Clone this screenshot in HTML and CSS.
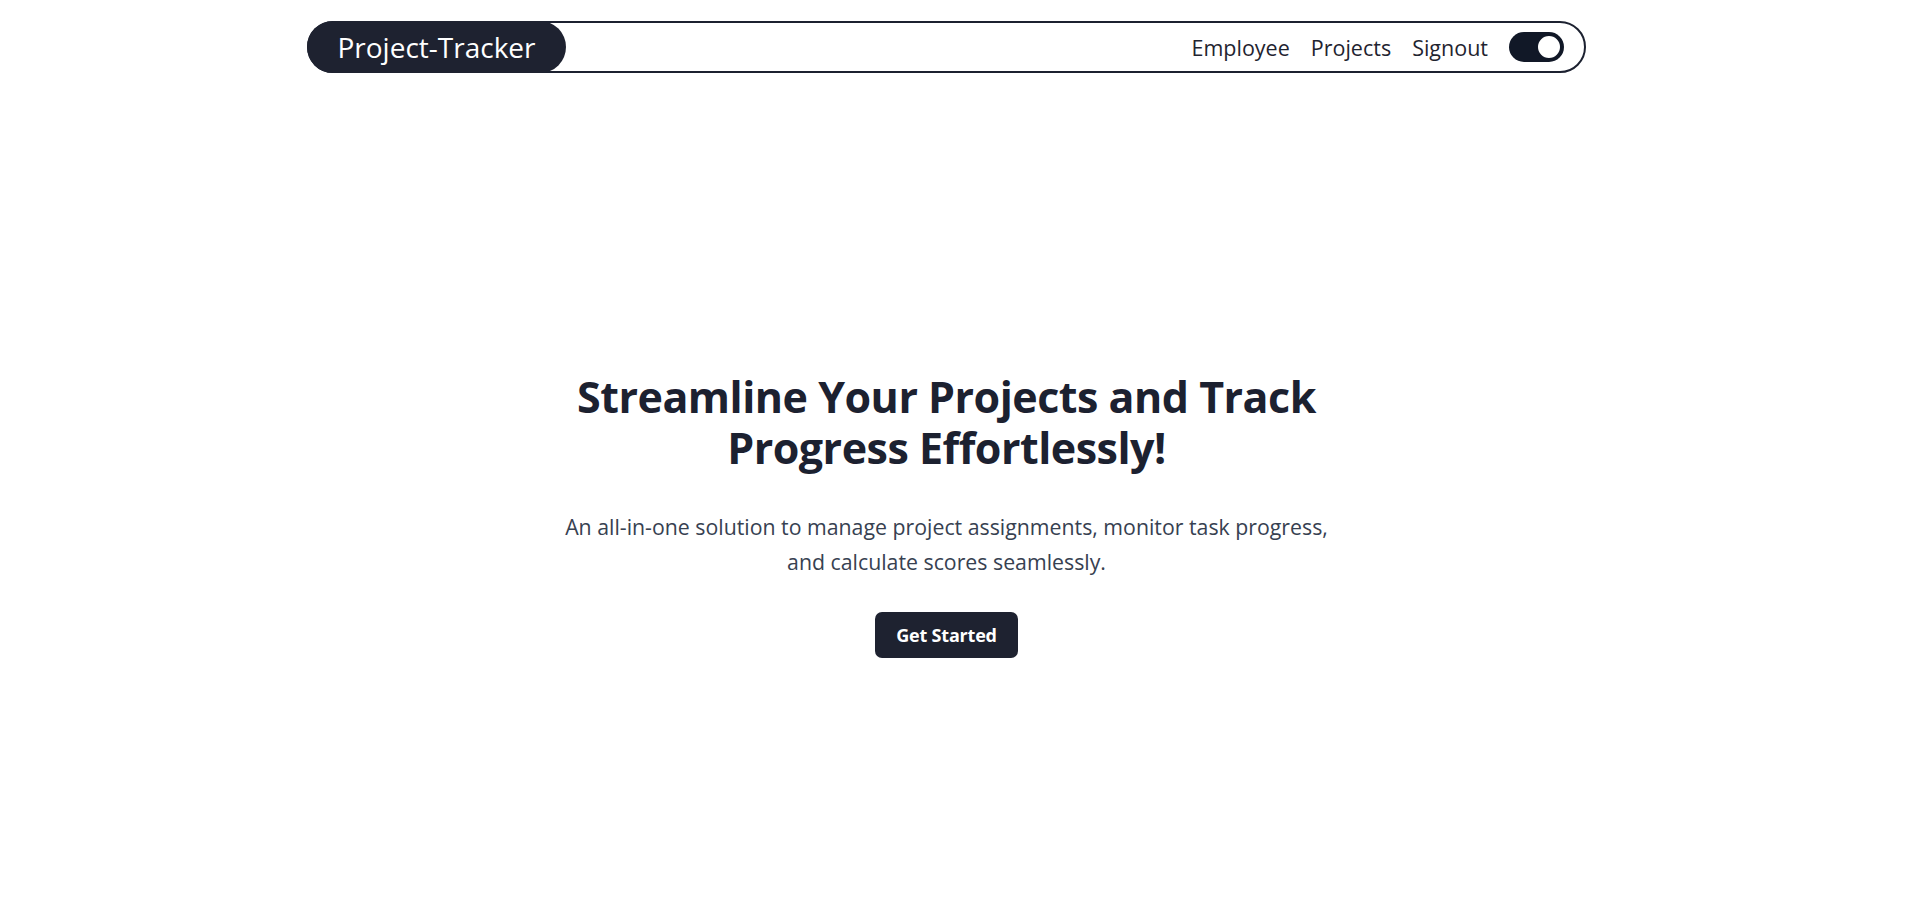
FILE: index.html
```html
<!DOCTYPE html>
<html lang="en">
<head>
<meta charset="utf-8">
<title>Project-Tracker</title>
<link rel="stylesheet" href="styles.css">
</head>
<body>
<div class="page">
  <header class="nav-wrap">
    <nav class="nav">
      <a class="logo" href="#">Project-Tracker</a>
      <div class="nav-right">
        <a class="nav-link" href="#">Employee</a>
        <a class="nav-link" href="#">Projects</a>
        <a class="nav-link" href="#">Signout</a>
        <span class="toggle"><span class="knob"></span></span>
      </div>
    </nav>
  </header>
  <main class="hero">
    <h1 class="hero-title">Streamline Your Projects and Track Progress Effortlessly!</h1>
    <p class="hero-text">An all-in-one solution to manage project assignments, monitor task progress, and calculate scores seamlessly.</p>
    <a class="cta" href="#">Get Started</a>
  </main>
</div>
</body>
</html>
```
FILE: styles.css
```css
* { box-sizing: border-box; }
html, body { margin: 0; padding: 0; background: #ffffff; }
body {
  font-family: "Open Sans", "Noto Sans", sans-serif;
  color: #1f2430;
}
a { text-decoration: none; color: inherit; }

.page {
  padding-right: 23px;
  min-height: 909px;
}

.nav-wrap {
  padding-top: 21px;
  display: flex;
  justify-content: center;
}
.nav {
  width: 1279px;
  height: 52px;
  border: 2px solid #1c2130;
  border-radius: 999px;
  display: flex;
  align-items: center;
  justify-content: space-between;
  padding-right: 20px;
}
.logo {
  margin-left: -2px;
  height: 52px;
  width: 259px;
  background: #1e2230;
  color: #ffffff;
  border-radius: 999px;
  display: flex;
  align-items: center;
  justify-content: center;
  font-size: 28px;
}
.nav-right {
  display: flex;
  align-items: center;
  gap: 21px;
}
.nav-link {
  font-size: 21.5px;
  color: #1f2430;
}
.toggle {
  width: 55px;
  height: 30px;
  border-radius: 999px;
  background: #111827;
  display: flex;
  align-items: center;
  justify-content: flex-end;
  padding-right: 2px;
}
.knob {
  width: 26px;
  height: 26px;
  border-radius: 50%;
  background: #ffffff;
  border: 2px solid #111827;
}

.hero {
  display: flex;
  flex-direction: column;
  align-items: center;
  text-align: center;
  padding-top: 298px;
}
.hero-title {
  margin: 0;
  max-width: 780px;
  font-size: 43px;
  line-height: 51px;
  font-weight: 700;
  color: #1c2130;
  letter-spacing: -0.5px;
}
.hero-text {
  margin: 36px 0 0;
  max-width: 800px;
  font-size: 21.3px;
  line-height: 35px;
  color: #374151;
}
.cta {
  margin-top: 33px;
  width: 143px;
  height: 46px;
  background: #1e2230;
  color: #ffffff;
  border-radius: 7px;
  display: flex;
  align-items: center;
  justify-content: center;
  font-size: 18px;
  font-weight: 700;
  letter-spacing: -0.2px;
}
```
